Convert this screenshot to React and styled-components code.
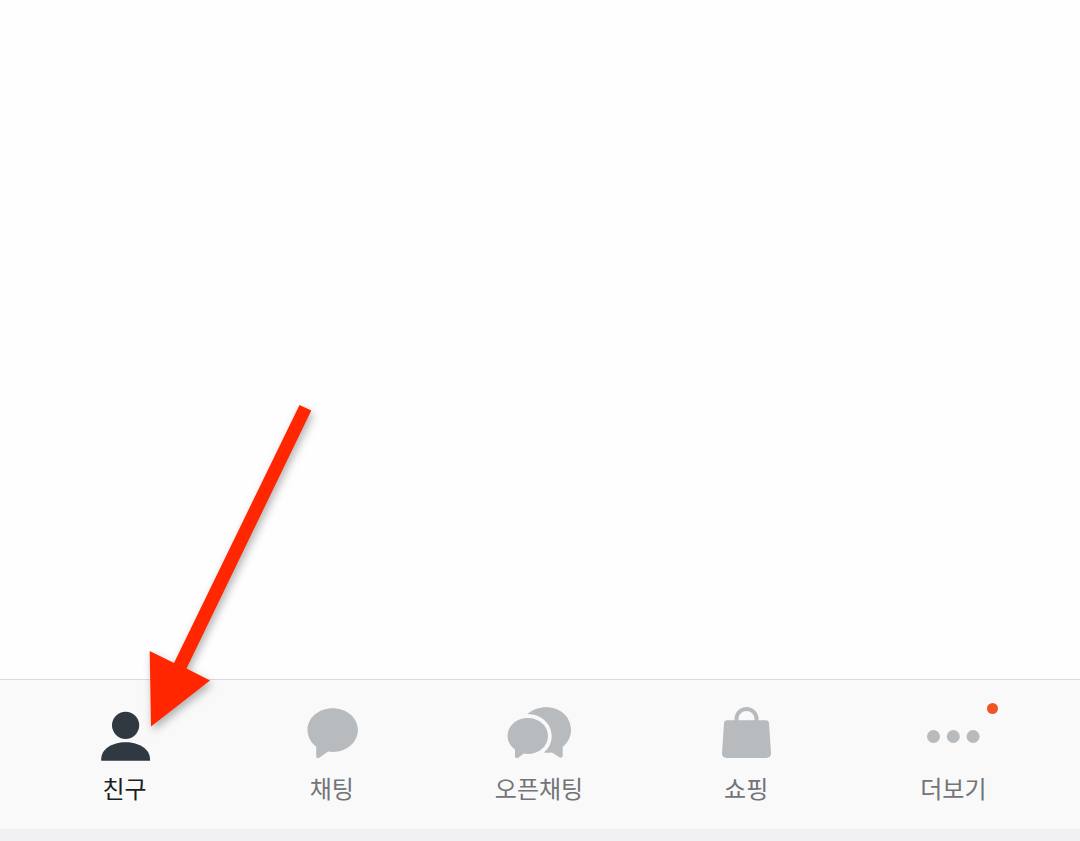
import React from "react";
import styled, { createGlobalStyle } from "styled-components";

const GlobalStyle = createGlobalStyle`
  *, *::before, *::after { box-sizing: border-box; }
  body {
    margin: 0;
    background: #ffffff;
    font-family: "Noto Sans CJK KR", "Noto Sans", sans-serif;
  }
`;

const Screen = styled.div`
  position: relative;
  display: flex;
  flex-direction: column;
  min-height: 100vh;
  background: #fefefe;
`;

const Content = styled.main`
  flex: 1;
`;

const TabBar = styled.nav`
  display: grid;
  grid-template-columns: repeat(5, 1fr);
  height: 150px;
  padding: 20px 23px 0 21px;
  background: #f9f9f9;
  border-top: 1px solid #dcdcde;
`;

const Tab = styled.button`
  display: flex;
  flex-direction: column;
  align-items: center;
  gap: 8px;
  padding: 0;
  border: 0;
  background: none;
  font-family: inherit;
  color: ${({ $active }) => ($active ? "#1b1d21" : "#727478")};
  cursor: pointer;
`;

const IconBox = styled.span`
  position: relative;
  display: block;
  width: 80px;
  height: 64px;
  color: ${({ $active }) => ($active ? "#303841" : "#b7bbbe")};

  svg {
    display: block;
  }
`;

const Badge = styled.span`
  position: absolute;
  top: 3px;
  right: -5px;
  width: 11px;
  height: 11px;
  border-radius: 50%;
  background: #f05523;
`;

const Label = styled.span`
  font-size: 24px;
  line-height: 32px;
  white-space: nowrap;
`;

const BottomInset = styled.div`
  height: 12px;
  background: #f0f0f2;
`;

const Arrow = styled.svg`
  position: absolute;
  left: 140px;
  bottom: 96px;
  pointer-events: none;
  filter: drop-shadow(2px 4px 4px rgba(0, 0, 0, 0.3));
`;

const Icon = ({ children }) => (
  <svg width="80" height="64" viewBox="0 0 80 64" fill="currentColor" aria-hidden="true">
    {children}
  </svg>
);

const FriendsIcon = () => (
  <Icon>
    <circle cx="40.6" cy="25.3" r="13.6" />
    <path d="M16.2 60.8v-1.600C16.2 49 27 42.200 40.600 42.200S65 49 65 59.200v1.600z" />
  </Icon>
);

const ChatIcon = () => (
  <Icon>
    <path d="M40.700 8.200c14 0 25.200 9.600 25.200 21.800S54.700 51.900 40.700 51.900c-1.600 0-3.100-.1-4.600-.4l-8.800 6.200c-1.500 1-3.100.3-3.100-1.500V46.500C18.700 42.500 15.500 36.700 15.500 30 15.500 17.800 26.700 8.200 40.700 8.200z" />
  </Icon>
);

const OpenChatIcon = () => (
  <Icon>
    <path d="M47.500 7.300c13.800 0 24.500 9.700 24.500 22.600 0 6.700-3.200 12.900-8.300 17v8.700c0 2-1.800 2.600-3.300 1.600L53 52.600c-2.600.3-5.500.3-8.200-.2C50 48.600 52.700 42.500 52.700 36c0-12.200-10.400-21.800-24.200-21.900C33 10 40 7.300 47.500 7.300z" />
    <path d="M28.800 17.900c11.400 0 20.200 7.900 20.200 18s-8.800 18-20.200 18c-1.400 0-2.600-.1-3.900-.3l-5.300 3.800c-1.600 1.100-3.600.5-3.600-1.500v-6.500C11 46.100 8.600 41.200 8.600 35.900c0-10.100 8.800-18 20.200-18z" />
  </Icon>
);

const ShoppingIcon = () => (
  <Icon>
    <path d="M30.500 22v-3a10 10 0 0 1 20 0v3" fill="none" stroke="currentColor" strokeWidth="4" />
    <path d="M21.200 20.200h38.600q3 0 3.200 3l2 29.600q.3 5.200-4.800 5.200H20.800q-5.100 0-4.800-5.200l2-29.600q.2-3 3.200-3z" />
  </Icon>
);

const MoreIcon = () => (
  <Icon>
    <circle cx="20.500" cy="36.500" r="6.500" />
    <circle cx="40.300" cy="36.500" r="6.500" />
    <circle cx="60.100" cy="36.500" r="6.500" />
  </Icon>
);

const tabs = [
  { label: "친구", icon: FriendsIcon, active: true },
  { label: "채팅", icon: ChatIcon },
  { label: "오픈채팅", icon: OpenChatIcon },
  { label: "쇼핑", icon: ShoppingIcon },
  { label: "더보기", icon: MoreIcon, badge: true },
];

export default function App() {
  return (
    <>
      <GlobalStyle />
      <Screen>
        <Content />
        <TabBar>
          {tabs.map(({ label, icon: TabIcon, active, badge }) => (
            <Tab key={label} type="button" $active={active} aria-current={active ? "page" : undefined}>
              <IconBox $active={active}>
                <TabIcon />
                {badge && <Badge />}
              </IconBox>
              <Label>{label}</Label>
            </Tab>
          ))}
        </TabBar>
        <BottomInset />
        <Arrow width="190" height="350" viewBox="0 0 190 350" aria-hidden="true">
          <path
            d="M159.500 10L171.300 15.500L46.500 273.500L70 285.500L11 331.500L9.700 256L34 268z"
            fill="#ff2600"
          />
        </Arrow>
      </Screen>
    </>
  );
}
